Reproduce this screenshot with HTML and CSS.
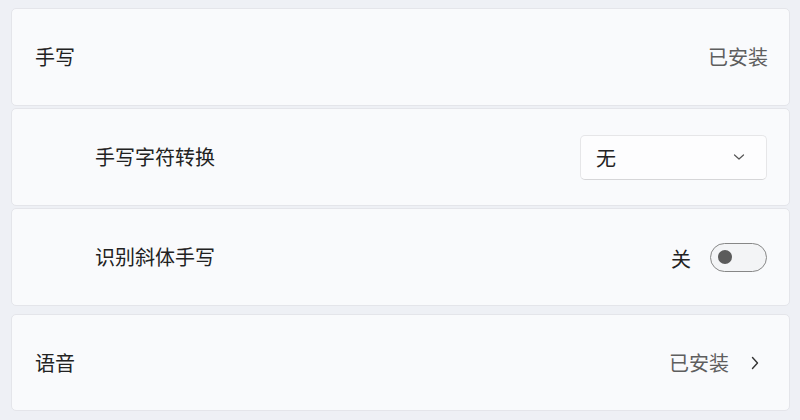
FILE: index.html
```html
<!DOCTYPE html>
<html lang="zh-CN">
<head>
<meta charset="utf-8">
<link rel="stylesheet" href="styles.css">
</head>
<body>
<div class="page">
  <div class="group">
    <div class="card">
      <span class="label">手写</span>
      <span class="status">已安装</span>
    </div>
    <div class="card sub">
      <span class="label">手写字符转换</span>
      <div class="select">
        <span>无</span>
        <svg class="chev-down" width="12" height="8" viewBox="0 0 12 8"><path d="M1.5 2 L6 6 L10.5 2" fill="none" stroke="#555" stroke-width="1.2" stroke-linecap="round" stroke-linejoin="round"/></svg>
      </div>
    </div>
    <div class="card sub">
      <span class="label">识别斜体手写</span>
      <div class="toggle-wrap">
        <span class="toggle-text">关</span>
        <div class="toggle"><div class="knob"></div></div>
      </div>
    </div>
  </div>
  <div class="card link">
    <span class="label">语音</span>
    <div class="right">
      <span class="status">已安装</span>
      <svg class="chev-right" width="10" height="16" viewBox="0 0 10 16"><path d="M2.5 2.5 L7.5 8 L2.5 13.5" fill="none" stroke="#333" stroke-width="1.4" stroke-linecap="round" stroke-linejoin="round"/></svg>
    </div>
  </div>
</div>
</body>
</html>
```
FILE: styles.css
```css
html, body {
  margin: 0;
  padding: 0;
  background: #eef0f5;
  width: 800px;
  height: 420px;
  overflow: hidden;
}
body {
  font-family: "Noto Sans CJK SC", "Microsoft YaHei", sans-serif;
  color: #1c1c1c;
}
.page {
  padding: 8px 10px 0 11px;
  display: flex;
  flex-direction: column;
  gap: 8px;
}
.group {
  display: flex;
  flex-direction: column;
  gap: 2px;
}
.card {
  box-sizing: border-box;
  height: 98px;
  background: #f9fafc;
  border: 1px solid #e4e5ea;
  border-radius: 5px;
  display: flex;
  align-items: center;
  justify-content: space-between;
  padding: 0 21px 0 23px;
}
.card.sub {
  padding-left: 83px;
}
.card.link {
  padding-right: 29px;
  height: 97px;
}
.label {
  font-size: 20px;
  line-height: 1;
  color: #222;
}
.status {
  font-size: 20px;
  line-height: 1;
  color: #5e5e5e;
}
.select {
  box-sizing: border-box;
  width: 187px;
  height: 45px;
  background: #fdfdfe;
  border: 1px solid #e6e6e8;
  border-bottom-color: #d6d6d8;
  border-radius: 5px;
  display: flex;
  align-items: center;
  justify-content: space-between;
  padding: 0 21px 0 15px;
  font-size: 20px;
  color: #222;
  margin-right: 1px;
}
.chev-down {
  display: block;
}
.toggle-wrap {
  display: flex;
  align-items: center;
  gap: 19px;
  margin-right: 1px;
}
.toggle-text {
  font-size: 20px;
  line-height: 1;
  color: #222;
  position: relative;
  top: 2px;
}
.toggle {
  box-sizing: border-box;
  width: 57px;
  height: 29px;
  border: 1px solid #878787;
  border-radius: 15px;
  background: #f3f4f6;
  display: flex;
  align-items: center;
  padding-left: 7px;
}
.knob {
  width: 14px;
  height: 14px;
  border-radius: 50%;
  background: #5b5b5b;
}
.right {
  display: flex;
  align-items: center;
  gap: 21px;
}
.chev-right {
  display: block;
}
```
